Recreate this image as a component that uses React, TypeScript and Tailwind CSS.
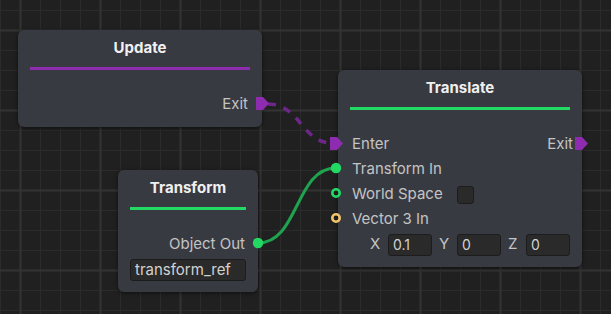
import type { ReactNode } from 'react';

const PURPLE = '#8e2cb0';
const GREEN = '#22d964';
const YELLOW = '#f2c46a';

// flow port (pentagon arrow)
const FlowPort = ({ className }: { className: string }) => (
  <svg className={`absolute ${className}`} width="13" height="13" viewBox="0 0 13 13">
    <polygon points="0,0 7,0 13,6.5 7,13 0,13" fill={PURPLE} />
  </svg>
);

const DataPort = ({ color, hollow, className }: { color: string; hollow?: boolean; className: string }) => (
  <svg className={`absolute ${className}`} width="12" height="12" viewBox="0 0 12 12">
    {hollow ? (
      <circle cx="6" cy="6" r="3.7" fill="none" stroke={color} strokeWidth="2.6" />
    ) : (
      <circle cx="6" cy="6" r="5.2" fill={color} />
    )}
  </svg>
);

const Node = ({
  title,
  barColor,
  className,
  children,
}: {
  title: string;
  barColor: string;
  className: string;
  children: ReactNode;
}) => (
  <div className={`absolute rounded-md bg-[#383a42] pt-[9px] shadow-[0_1px_4px_rgba(0,0,0,0.55)] ${className}`}>
    <div className="h-[18px] text-center text-[15px] font-bold leading-[18px] text-[#f0f0f0]">{title}</div>
    <div className={`mx-3 mt-[10px] h-[3px] ${barColor}`} />
    <div className="mt-[22px]">{children}</div>
  </div>
);

const Field = ({ value, className }: { value: string; className: string }) => (
  <div
    className={`flex items-center rounded-[3px] border border-[#1c1c1c] bg-[#2a2a2a] pl-1 text-[14px] text-[#d2d2d2] ${className}`}
  >
    {value}
  </div>
);

export default function App() {
  return (
    <div className="relative h-[314px] w-[611px] overflow-hidden bg-[#202020] font-['Inter',sans-serif]">
      {/* grid + wires */}
      <svg className="absolute inset-0" width="611" height="314">
        <defs>
          <pattern id="minor" width="20" height="20" x="0" y="10" patternUnits="userSpaceOnUse">
            <rect x="0" y="0" width="1" height="20" fill="#2b2b2b" />
            <rect x="0" y="0" width="20" height="1" fill="#2b2b2b" />
          </pattern>
          <pattern id="major" width="80" height="80" x="19.5" y="29.5" patternUnits="userSpaceOnUse">
            <rect x="0" y="0" width="2" height="80" fill="#333333" />
            <rect x="0" y="0" width="80" height="2" fill="#333333" />
          </pattern>
        </defs>
        <rect width="611" height="314" fill="url(#minor)" />
        <rect width="611" height="314" fill="url(#major)" />
        <path
          d="M268,104 C300,104 302,143 332,143"
          fill="none"
          stroke="#6d2689"
          strokeWidth="3.5"
          strokeDasharray="8 8"
        />
        <path d="M258,243 C299,243 295,168 336,168" fill="none" stroke="#1fa34e" strokeWidth="3" />
      </svg>

      <Node title="Update" barColor="bg-[#8e2cb0]" className="left-[18px] top-[30px] w-[244px] pb-[10px]">
        <div className="relative flex h-[25px] items-center justify-end pr-[14px] text-[15px] text-[#c4c4c4]">
          Exit
          <FlowPort className="right-[-7px] top-[5px]" />
        </div>
      </Node>

      <Node title="Translate" barColor="bg-[#22d964]" className="left-[338px] top-[70px] w-[244px] pb-[10px]">
        <div className="text-[15px] text-[#c4c4c4]">
          <div className="relative flex h-[25px] items-center justify-between pl-[14px] pr-[9px]">
            <span>Enter</span>
            <span>Exit</span>
            <FlowPort className="left-[-8px] top-[5px]" />
            <FlowPort className="right-[-6px] top-[5px]" />
          </div>
          <div className="relative flex h-[25px] items-center pl-[14px]">
            Transform In
            <DataPort color={GREEN} className="left-[-8px] top-[5px]" />
          </div>
          <div className="relative flex h-[25px] items-center pl-[14px]">
            <span className="w-[105px]">World Space</span>
            <div className="h-[18px] w-[17px] rounded-[3px] border border-[#1c1c1c] bg-[#2a2a2a]" />
            <DataPort color={GREEN} hollow className="left-[-8px] top-[5px]" />
          </div>
          <div className="relative flex h-[25px] items-center pl-[14px]">
            Vector 3 In
            <DataPort color={YELLOW} hollow className="left-[-8px] top-[5px]" />
          </div>
          <div className="flex h-[25px] items-center gap-[7px] pl-[32px]">
            {[
              ['X', '0.1'],
              ['Y', '0'],
              ['Z', '0'],
            ].map(([axis, value]) => (
              <div key={axis} className="flex items-center">
                <span className="w-[18px]">{axis}</span>
                <Field value={value} className="h-[22px] w-[44px]" />
              </div>
            ))}
          </div>
        </div>
      </Node>

      <Node title="Transform" barColor="bg-[#22d964]" className="left-[118px] top-[170px] w-[140px] pb-[11px]">
        <div className="relative flex h-[25px] items-center justify-end pr-[13px] text-[15px] text-[#c4c4c4]">
          Object Out
          <DataPort color={GREEN} className="right-[-6px] top-[5px]" />
        </div>
        <Field value="transform_ref" className="mx-3 mt-0.5 h-[22px] text-[15px]" />
      </Node>
    </div>
  );
}
